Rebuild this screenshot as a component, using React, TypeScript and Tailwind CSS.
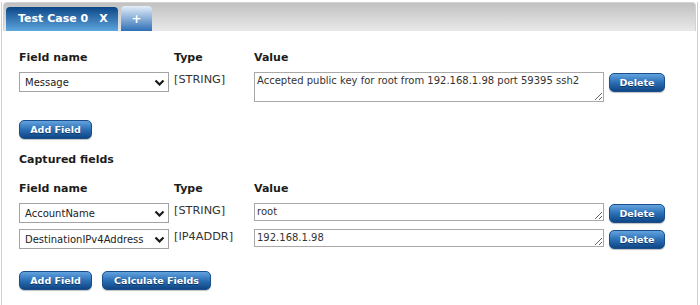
import React from "react";

const font = "font-['DejaVu_Sans',Verdana,sans-serif]";

function BlueButton({ label, width }: { label: string; width: string }) {
  return (
    <button
      className={`block ${width} h-[19px] shrink-0 rounded-[5px] border border-[#1a4f8c] bg-gradient-to-b from-[#62a3de] via-[#2b6fb5] to-[#0f4684] text-[9.5px] font-bold leading-[17px] text-white [text-shadow:0_1px_0_#0b3566] shadow-[0_1px_1px_rgba(0,0,0,0.25)]`}
    >
      {label}
    </button>
  );
}

function FieldSelect({ value }: { value: string }) {
  return (
    <div className="relative flex h-[20px] w-[150px] shrink-0 items-center border border-[#a3a3a3] bg-white pl-[5px] text-[10px] text-[#222]">
      <span>{value}</span>
      <svg
        className="absolute right-[3px] top-[6px]"
        width="11"
        height="7"
        viewBox="0 0 11 7"
      >
        <polyline
          points="1.5,1.5 5.5,5.5 9.5,1.5"
          fill="none"
          stroke="#1a1a1a"
          strokeWidth="2.2"
        />
      </svg>
    </div>
  );
}

function HeaderRow() {
  return (
    <div className="flex text-[11px] font-bold leading-[13px] text-[#1c1c1c]">
      <div className="w-[155px]">Field name</div>
      <div className="w-[80px]">Type</div>
      <div>Value</div>
    </div>
  );
}

function FieldRow({
  name,
  type,
  value,
  tall,
}: {
  name: string;
  type: string;
  value: string;
  tall?: boolean;
}) {
  return (
    <div className="flex h-[20px] items-start overflow-visible">
      <FieldSelect value={name} />
      <div className="ml-[5px] w-[80px] pt-[1px] text-[11.3px] leading-[13px] text-[#333]">
        {type}
      </div>
      <textarea
        className={`${tall ? "h-[30px]" : "h-[18px]"} block w-[350px] shrink-0 resize-y border border-[#a9a9a9] px-[2px] pt-[2px] text-[10px] leading-[12px] text-[#333] outline-none`}
        defaultValue={value}
      />
      <div className="ml-[5px] mt-[1px] flex">
        <BlueButton label="Delete" width="w-[56px]" />
      </div>
    </div>
  );
}

export default function App() {
  return (
    <div className={`${font} h-[305px] w-[700px] bg-white`}>
      <div className="ml-[1px] h-full w-[697px] border-x border-[#cfcfcf]">
        {/* tab bar */}
        <div className="mx-[1px] mt-[2px] flex h-[29px] items-end rounded-t-[4px] border border-b-0 border-[#d2d2d2] bg-gradient-to-b from-[#c1c1c1] to-[#e9e9e9] pl-[2px]">
          <div className="flex h-[24px] w-[112px] items-center rounded-t-[4px] bg-gradient-to-b from-[#0a4787] to-[#5ea6de] pl-[12px] text-[11px] font-bold text-white">
            <span>Test Case 0</span>
            <span className="ml-[11px]">X</span>
          </div>
          <div className="ml-[3px] flex h-[25px] w-[31px] items-center justify-center rounded-t-[4px] bg-gradient-to-b from-[#e4eef8] to-[#2c70b6] text-[12px] font-bold text-white">
            +
          </div>
        </div>

        {/* panel */}
        <div className="pl-[17px]">
          <div className="pt-[20px]">
            <HeaderRow />
          </div>
          <div className="mt-[8px] h-[30px]">
            <FieldRow
              name="Message"
              type="[STRING]"
              value="Accepted public key for root from 192.168.1.98 port 59395 ssh2"
              tall
            />
          </div>
          <div className="mt-[18px] flex">
            <BlueButton label="Add Field" width="w-[73px]" />
          </div>
          <div className="mt-[14px] text-[11px] font-bold leading-[13px] text-[#1c1c1c]">
            Captured fields
          </div>
          <div className="mt-[16px]">
            <HeaderRow />
          </div>
          <div className="mt-[8px] flex flex-col gap-[6px]">
            <FieldRow name="AccountName" type="[STRING]" value="root" />
            <FieldRow
              name="DestinationIPv4Address"
              type="[IP4ADDR]"
              value="192.168.1.98"
            />
          </div>
          <div className="mt-[22px] flex gap-[10px]">
            <BlueButton label="Add Field" width="w-[73px]" />
            <BlueButton label="Calculate Fields" width="w-[109px]" />
          </div>
        </div>
      </div>
    </div>
  );
}
